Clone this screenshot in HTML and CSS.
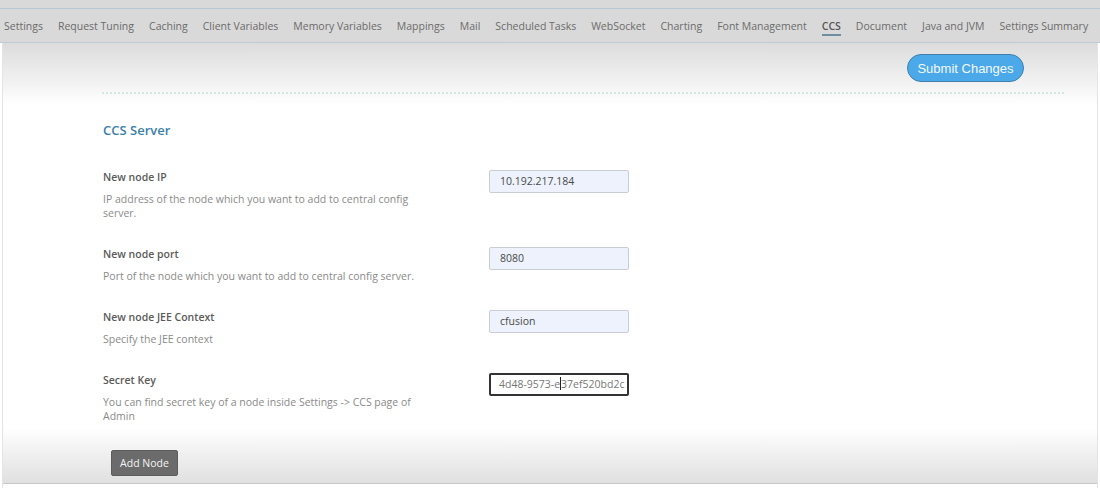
FILE: index.html
```html
<!DOCTYPE html>
<html>
<head>
<meta charset="utf-8">
<link rel="stylesheet" href="styles.css">
</head>
<body>
<div class="page">
  <div class="top-strip"></div>
  <nav class="tabs">
    <span class="tab">Settings</span>
    <span class="tab">Request Tuning</span>
    <span class="tab">Caching</span>
    <span class="tab">Client Variables</span>
    <span class="tab">Memory Variables</span>
    <span class="tab">Mappings</span>
    <span class="tab">Mail</span>
    <span class="tab">Scheduled Tasks</span>
    <span class="tab">WebSocket</span>
    <span class="tab">Charting</span>
    <span class="tab">Font Management</span>
    <span class="tab active">CCS</span>
    <span class="tab">Document</span>
    <span class="tab">Java and JVM</span>
    <span class="tab">Settings Summary</span>
  </nav>
  <header class="toolbar">
    <div class="toolbar-row">
      <button class="submit">Submit Changes</button>
    </div>
    <div class="divider"></div>
  </header>
  <main class="content">
    <h2 class="section-title">CCS Server</h2>
    <div class="row">
      <div class="info">
        <div class="label">New node IP</div>
        <div class="desc">IP address of the node which you want to add to central config server.</div>
      </div>
      <div class="field">10.192.217.184</div>
    </div>
    <div class="row">
      <div class="info">
        <div class="label">New node port</div>
        <div class="desc">Port of the node which you want to add to central config server.</div>
      </div>
      <div class="field">8080</div>
    </div>
    <div class="row">
      <div class="info">
        <div class="label">New node JEE Context</div>
        <div class="desc">Specify the JEE context</div>
      </div>
      <div class="field">cfusion</div>
    </div>
    <div class="row">
      <div class="info">
        <div class="label">Secret Key</div>
        <div class="desc">You can find secret key of a node inside Settings -&gt; CCS page of Admin</div>
      </div>
      <div class="field focused">4d48-9573-e<span class="caret"></span>37ef520bd2c</div>
    </div>
  </main>
  <footer class="actions">
    <button class="add-node">Add Node</button>
  </footer>
</div>
</body>
</html>
```

FILE: styles.css
```css
html, body {
  margin: 0;
  padding: 0;
  background: #ffffff;
}
body {
  font-family: "Open Sans", "Liberation Sans", sans-serif;
  width: 1100px;
  height: 488px;
  overflow: hidden;
}
.page {
  height: 488px;
  border-left: 1px solid #e4e4e4;
  border-right: 1px solid #e4e4e4;
  margin: 0 2px;
  box-sizing: border-box;
  display: flex;
  flex-direction: column;
}
.top-strip {
  flex-shrink: 0;
  height: 8px;
  background: #d9d9d9;
  border-bottom: 1px solid #b8c9d6;
  margin: 0 -3px;
}
.tabs {
  flex-shrink: 0;
  height: 33px;
  background: #d9d9d9;
  border-bottom: 1px solid #bccbd7;
  margin: 0 -3px;
  padding-left: 4px;
  display: flex;
  align-items: center;
  gap: 15px;
  font-size: 10.5px;
  color: #6b6b6b;
  white-space: nowrap;
}
.tab {
  position: relative;
  line-height: 16px;
}
.tab.active {
  color: #555555;
  font-weight: 600;
}
.tab.active::after {
  content: "";
  position: absolute;
  left: 0;
  right: 0;
  bottom: -2px;
  height: 2px;
  background: #6f8ea3;
}
.toolbar {
  flex-shrink: 0;
  background: linear-gradient(#dcdcdc 0%, #f4f4f4 70%, #ffffff 100%);
  height: 62px;
  padding-top: 11px;
  box-sizing: border-box;
}
.toolbar-row {
  display: flex;
  justify-content: flex-end;
  padding-right: 73px;
}
.submit {
  font-family: "Liberation Sans", Arial, sans-serif;
  font-size: 13px;
  color: #f4f8fc;
  background: #4ba9ea;
  border: 1px solid #3f7fae;
  border-radius: 14px;
  height: 28px;
  width: 117px;
  padding: 0;
}
.divider {
  margin: 10px 33px 0 99px;
  border-top: 2px dotted #d3e6e2;
}
.content {
  flex: 1;
  min-height: 0;
  padding-left: 100px;
}
.section-title {
  margin: 16px 0 30px 0;
  font-size: 13px;
  line-height: 18px;
  font-weight: 600;
  color: #3b80a9;
}
.row {
  display: flex;
  align-items: flex-start;
  margin-bottom: 26px;
}
.info {
  width: 386px;
}
.label {
  font-size: 10.5px;
  line-height: 16px;
  font-weight: 600;
  color: #5a5a5a;
}
.desc {
  width: 320px;
  margin-top: 7px;
  font-size: 10.5px;
  line-height: 14px;
  color: #8a8a8a;
}
.field {
  margin-top: 1px;
  width: 140px;
  height: 23px;
  box-sizing: border-box;
  background: #edf2fc;
  border: 1px solid #c9cdd5;
  border-radius: 2px;
  padding-left: 10px;
  font-size: 10.5px;
  line-height: 21px;
  color: #4a4a4a;
  white-space: nowrap;
  overflow: hidden;
}
.field.focused {
  background: #ffffff;
  border: 2px solid #333333;
  padding-left: 8px;
  line-height: 19px;
  color: #777777;
}
.caret {
  display: inline-block;
  width: 1px;
  height: 13px;
  background: #222;
  vertical-align: -2px;
}
.actions {
  flex-shrink: 0;
  height: 56px;
  background: linear-gradient(#ffffff 0%, #efefef 50%, #e0e0e0 100%);
  border-bottom: 1px solid #c8c8c8;
  margin-bottom: 4px;
  padding-left: 108px;
  padding-top: 22px;
  box-sizing: border-box;
}
.add-node {
  font-family: "Open Sans", sans-serif;
  font-size: 10.5px;
  color: #f4f4f4;
  background: #6b6b6b;
  border: 1px solid #5c5c5c;
  border-radius: 2px;
  height: 26px;
  width: 67px;
  padding: 0;
}
```
